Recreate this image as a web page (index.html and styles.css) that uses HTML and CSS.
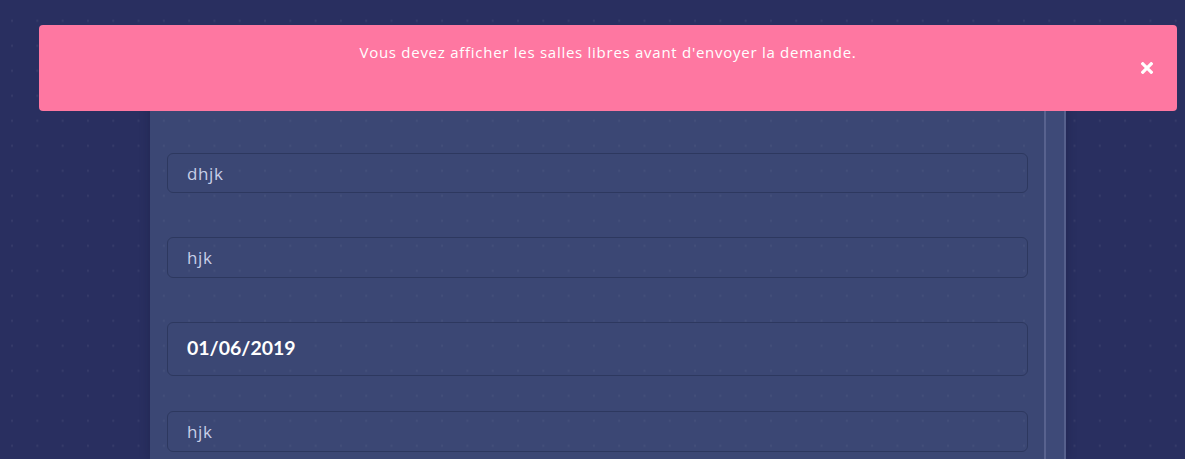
FILE: index.html
```html
<!DOCTYPE html>
<html lang="fr">
<head>
<meta charset="utf-8">
<title>Demande de salle</title>
<link rel="stylesheet" href="styles.css">
</head>
<body>
<div class="page">
  <div class="panel">
    <form class="form">
      <div class="field f1"><input class="input" type="text" value="dhjk"></div>
      <div class="field f2"><input class="input" type="text" value="hjk"></div>
      <div class="field f3"><input class="input date" type="text" value="01/06/2019"></div>
      <div class="field f4"><input class="input" type="text" value="hjk"></div>
    </form>
    <div class="strip"></div>
  </div>
</div>
<div class="alert">
  <p class="alert-text">Vous devez afficher les salles libres avant d'envoyer la demande.</p>
  <button class="alert-close" type="button" aria-label="Fermer">
    <svg width="12" height="12" viewBox="0 0 12 12"><path d="M1.8 1.8 L10.2 10.2 M10.2 1.8 L1.8 10.2" stroke="#fff" stroke-width="3.2" stroke-linecap="square" fill="none"/></svg>
  </button>
</div>
</body>
</html>
```
FILE: styles.css
```css
html, body {
  margin: 0;
  padding: 0;
  height: 100%;
}
body {
  background-color: #292f60;
  background-image: radial-gradient(circle, rgba(255,255,255,0.07) 0.9px, transparent 1.3px);
  background-size: 25.3px 25px;
  background-position: -0.6px 8.3px;
  font-family: "Open Sans", "Liberation Sans", sans-serif;
  overflow: hidden;
}
.page {
  display: flex;
  padding-left: 150px;
  padding-top: 60px;
  height: 100%;
  box-sizing: border-box;
}
.panel {
  display: flex;
  width: 916px;
  background-color: #3b4774;
  background-image: radial-gradient(circle, rgba(255,255,255,0.05) 0.9px, transparent 1.3px);
  background-size: 25.3px 25px;
  background-position: -150.6px -51.7px;
  box-shadow: 0 0 10px rgba(10, 14, 40, 0.25);
}
.form {
  flex: 1;
  display: flex;
  flex-direction: column;
  padding: 93px 16px 0 17px;
  margin: 0;
}
.field { display: flex; }
.f2, .f3 { margin-top: 44px; }
.f4 { margin-top: 35px; }
.input {
  flex: 1;
  box-sizing: border-box;
  height: 40px;
  border: 1px solid #2d385f;
  border-radius: 6px;
  background: transparent;
  padding: 0 19px;
  font-family: "Open Sans", "Liberation Sans", sans-serif;
  font-size: 17px;
  letter-spacing: 0.6px;
  color: #c8cfe8;
  outline: none;
}
.f2 .input, .f4 .input { height: 41px; }
.input.date {
  height: 54px;
  padding-bottom: 3px;
  font-family: Lato, "Liberation Sans", sans-serif;
  font-weight: 700;
  font-size: 19.5px;
  letter-spacing: 0;
  color: #ffffff;
}
.strip {
  width: 18px;
  background: #3e4a78;
  border-left: 2px solid #58628e;
  border-right: 2px solid #56608c;
}
.alert {
  position: absolute;
  left: 39px;
  top: 25px;
  width: 1138px;
  height: 86px;
  box-sizing: border-box;
  background: #fe77a1;
  border-radius: 4px;
  padding: 15px 50px 0;
}
.alert-text {
  margin: 0;
  text-align: center;
  color: #ffffff;
  font-size: 15px;
  line-height: 24px;
  letter-spacing: 0.73px;
}
.alert-close {
  position: absolute;
  right: 20px;
  top: 33px;
  width: 20px;
  height: 20px;
  padding: 0;
  border: 0;
  background: transparent;
  display: flex;
  align-items: center;
  justify-content: center;
}
```
